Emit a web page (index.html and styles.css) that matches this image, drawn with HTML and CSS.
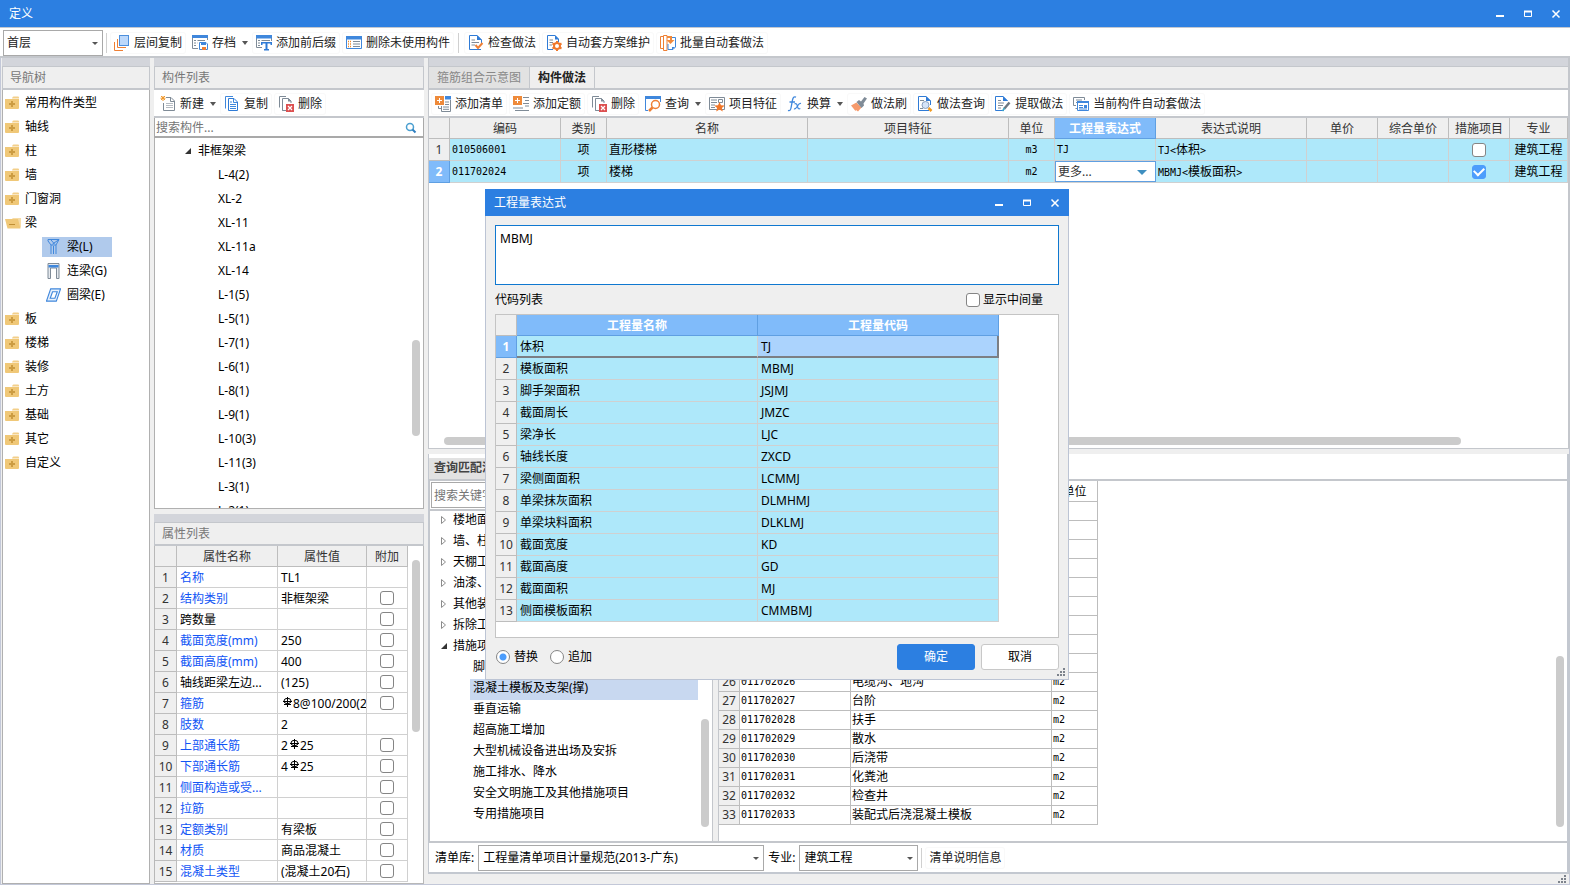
FILE: index.html
```html
<!DOCTYPE html>
<html lang="zh-CN">
<head>
<meta charset="utf-8">
<title>定义</title>
<link rel="stylesheet" href="styles.css">
</head>
<body>
<svg class="defs" aria-hidden="true">
  <symbol id="i-layers" viewBox="0 0 16 16"><rect x="5.5" y=".5" width="9" height="10" fill="#bcd8fb" stroke="#4d8fdc"/><path d="M3.500 4v8.500H12M.5 7v8.500H9" fill="none" stroke="#ee7f35"/></symbol>
  <symbol id="i-archive" viewBox="0 0 16 16"><path d="M.5 3v10.500H6M15.500 3v2" fill="none" stroke="#7f8b97"/><path d="M0 0h16v3H0z" fill="#3f87dc"/><path d="M2 5.500h2M5.500 5.500H13M2 8h2M5.500 8H6M2 10.500h2" stroke="#7f8b97"/><path d="M7.500 7.500H14l1.500 1.500v5.500h-8z" fill="#fff" stroke="#3f87dc"/><path d="M9 7h5v3H9z" fill="#3f87dc"/><path d="M10 12h4v3h-4z" fill="#ee7f35"/></symbol>
  <symbol id="i-affix" viewBox="0 0 16 16"><path d="M.5 3v9.500H6M15.500 3v3" fill="none" stroke="#7f8b97"/><path d="M0 0h16v3.500H0z" fill="#3f87dc"/><path d="M2 5.500h2M5.500 5.500H14M2 8h2M2 10.500h2" stroke="#7f8b97"/><path d="M5 7h11v3h-1.500V8.500h-3V14H13v1.500H8V14h1.500V8.500h-3V10H5z" fill="#2f7bd6"/></symbol>
  <symbol id="i-unused" viewBox="0 0 16 16"><path d="M.5 1.500h15v12H.5z" fill="#fff" stroke="#3f87dc"/><path d="M0 1h16v3.500H0z" fill="#3f87dc"/><path d="M2 6.500h3M2 9h3M2 11.500h3" stroke="#f08a2c" stroke-width="1.500" stroke-dasharray="1 1"/><path d="M7 6.500h7M7 9h7M7 11.500h7" stroke="#7f8b97"/></symbol>
  <symbol id="i-check" viewBox="0 0 16 16"><path d="M1.500.5H9L13.500 5v5M1.500.5v14H13" fill="none" stroke="#2f7bd6"/><path d="M9 0v5h5z" fill="#2f7bd6"/><path d="M3.500 5H7M3.500 7.500H11M3.500 10H7" stroke="#7f8b97"/><path d="M7.500 10l2.500 3 4.500-5" fill="none" stroke="#ee7f35" stroke-width="2"/></symbol>
  <symbol id="i-gear" viewBox="0 0 16 16"><path d="M7 14.500H1.500V.5H9L12.500 4v3" fill="none" stroke="#2f7bd6"/><path d="M9 0v4.500h4z" fill="#2f7bd6"/><path d="M3.500 5H7M3.500 7.500H7M3.500 10H6" stroke="#7f8b97"/><circle cx="11" cy="11" r="3" fill="#fff" stroke="#f0772a" stroke-width="2"/><path d="M11 6v1.500M11 14.500V16M6.500 8.500l1.500.8M14 12.700l1.500.8M6.500 13.500l1.500-.8M14 9.300l1.500-.8" stroke="#f0772a" stroke-width="2"/></symbol>
  <symbol id="i-batch" viewBox="0 0 16 16"><path d="M3 1.500H.5v12H3" fill="none" stroke="#ee7f35"/><path d="M4 .5h3v15H3.500V.5z" fill="#fff" stroke="#ee7f35"/><path d="M12 2.500h3.500V12L13 14.500H8V9" fill="none" stroke="#3f87dc"/><path d="M7 1h5v4h2.500L10.500 9 6.500 5H10V3H7z" fill="#f08a3c"/><path d="M12 12h3l-3 3z" fill="#3f87dc"/></symbol>
  <symbol id="i-addlist" viewBox="0 0 16 16"><path d="M3.500 10v2.500H6M6.500 10v5.500h9V4M13 15" fill="none" stroke="#7f8b97"/><path d="M0 0h9v9H0z" fill="#ee8a3a"/><path d="M4.500 2v5M2 4.500h5" stroke="#fff"/><path d="M10 0h6v3.500h-6z" fill="#3f87dc"/><path d="M10 6h4M10 8.500h4M8 11h6M8 13.300h6" stroke="#7f8b97"/></symbol>
  <symbol id="i-addquota" viewBox="0 0 16 16"><path d="M0 0h9v9H0z" fill="#ee8a3a"/><path d="M4.500 2v5M2 4.500h5" stroke="#fff"/><path d="M10 1.500h6M12 4.500h4M10 7.500h6M12 10h4M0 12h10M2 14.500h14" stroke="#7f8b97"/></symbol>
  <symbol id="i-del" viewBox="0 0 16 16"><path d="M8 .5H1.500v11M5 14.500h-.500v-12h6L13 5v2M8 14.500H4.500" fill="none" stroke="#7f8b97"/><path d="M10 2v3.500h3.500z" fill="#7f8b97"/><path d="M8 8h8v8H8z" fill="#dc5050"/><path d="M10 10l4 4M14 10l-4 4" stroke="#fff" stroke-width="1.200"/></symbol>
  <symbol id="i-query" viewBox="0 0 16 16"><path d="M.5 3v11.500H3M15.500 3v3" fill="none" stroke="#3f87dc"/><path d="M0 0h16v3H0z" fill="#3f87dc"/><circle cx="10.500" cy="8.500" r="4" fill="#fff" stroke="#ee7f35" stroke-width="1.500"/><path d="M7.500 11.500L4 15" stroke="#ee7f35" stroke-width="2.500"/></symbol>
  <symbol id="i-feature" viewBox="0 0 16 16"><path d="M.5 1.500h15v12H.5z" fill="#fff" stroke="#7f8b97"/><path d="M2 4h6M2 6.500h6M2 9h4M2 11.500h4M9.500 3.500h4v3h-4z" fill="none" stroke="#7f8b97"/><path d="M10.500 6l1.500 3.200 3.700.3-2.800 2.400.9 3.600-3.300-1.900L7.200 15.500l.9-3.600-2.800-2.400 3.700-.3z" fill="#f0772a"/></symbol>
  <symbol id="i-fx" viewBox="0 0 16 16"><path d="M9 1.200C7 .2 6 1.500 5.500 4L4 12c-.4 2.200-1.300 3-3 2.300M2.500 6H8" fill="none" stroke="#3f87dc" stroke-width="1.300"/><path d="M7.500 8c2-1 2.500.5 3 2.500s1 3 2.800 2M14 7.500c-1.500-.5-2.300.5-3.500 2.500s-2 3.500-3.500 2.700" fill="none" stroke="#3f87dc" stroke-width="1.200"/></symbol>
  <symbol id="i-brush" viewBox="0 0 16 16"><path d="M0 9.500L5.500 6.500l5 5L7 15.500l-2-1.500-.5 1z" fill="#f69a6c"/><path d="M5.500 6L8 4l2 1.500L13.500 1 16 2.500 12.500 7.500l.5 2L10.500 12z" fill="#7f8b97"/></symbol>
  <symbol id="i-docquery" viewBox="0 0 16 16"><path d="M12 14.500H1.500V.5H9L13.500 5v4" fill="none" stroke="#2f7bd6"/><path d="M9 0v5h5z" fill="#2f7bd6"/><path d="M3 4.500h4M3 12.500h3" stroke="#7f8b97"/><circle cx="8.500" cy="9" r="3.500" fill="#d5e4f8" stroke="#8aa0bd"/><path d="M11.500 12l3 3" stroke="#f29a1f" stroke-width="2.500"/></symbol>
  <symbol id="i-extract" viewBox="0 0 16 16"><path d="M9 14.500H.5V.5H8L12.500 5" fill="none" stroke="#2f7bd6"/><path d="M8 0v5h5z" fill="#2f7bd6"/><path d="M3 4.500h3M3 7h6M3 9.500h5M3 12h3" stroke="#7f8b97"/><path d="M14.500 6.500L9 13" stroke="#6c7780" stroke-width="2.500"/><path d="M9.500 12L7.500 15" stroke="#3fa9c9" stroke-width="1.500"/></symbol>
  <symbol id="i-auto" viewBox="0 0 16 16"><path d="M3 9.500H.5v-8h11V4M3 4h6M3 6.500h1M2.500 12.500H4" fill="none" stroke="#7f8b97"/><path d="M4.500 5.500h11v9h-11z" fill="#fff" stroke="#3f87dc"/><path d="M4 5h12v2H4zM11 9h3v3h-3z" fill="#3f87dc"/><path d="M6 9.500h4M6 11.500h4M6 13h8" stroke="#3f87dc"/></symbol>
  <symbol id="i-new" viewBox="0 0 16 16"><path d="M6 1.500h5L14.500 5v9.500h-11V7" fill="none" stroke="#7f8b97"/><path d="M10.500 1v4.500H15" fill="none" stroke="#7f8b97"/><path d="M6 7.500h7M6 9.500h7M6 11.500h7" stroke="#b6bcc3"/><path d="M1 0l4 4M5 0L1 4M3-.5v5.500M.5 2.200h5" stroke="#f0982c"/></symbol>
  <symbol id="i-copy" viewBox="0 0 16 16"><path d="M9 .5H1.500v12" fill="none" stroke="#3f87dc"/><path d="M4.500 2.500H10L13.500 6v8.500h-9z" fill="#fff" stroke="#2f7bd6"/><path d="M9.500 2.500V6.500H13M6 6h2M6 8.500h6M6 10.500h6M6 12.500h6" fill="none" stroke="#3f87dc"/></symbol>
  <symbol id="i-folder" viewBox="0 0 14 14"><path d="M7 2.500Q7.500.5 8.500.5H13q1 0 1 1v1z" fill="#f3cf89"/><path d="M0 3h14v9q0 1-1 1H1q-1 0-1-1z" fill="#f0c878"/><path d="M7 5v6M4 8h6" stroke="#cc9c42" stroke-width="2"/></symbol>
  <symbol id="i-open" viewBox="0 0 16 14"><path d="M7 2h9v9l-1 1z" fill="#f6dca8"/><path d="M0 3h13l2.500 9.500h-13z" fill="#f0c878"/><path d="M4 8.500h6" stroke="#c08f35"/></symbol>
  <symbol id="i-beam" viewBox="0 0 14 16"><path d="M1.500.5h11L9.500 6v9M4.500 15V6L1.500 2V.5M4.500 6h5M4.500 1L8 5M12 1L6 5M7 7v8" fill="none" stroke="#3f87dc"/></symbol>
  <symbol id="i-link" viewBox="0 0 14 16"><path d="M1.500.5h11v15H10V5H4v10.500H1.500z" fill="#e5e9ee" stroke="#7f8b97"/><path d="M2 2h10v2.500H2z" fill="#3f87dc"/></symbol>
  <symbol id="i-ring" viewBox="0 0 16 16"><path d="M5 1.500h10.500L11 14.500H.5zM7 4.500h5L9.500 11.500h-5z" fill="#e7f1fd" stroke="#3f87dc" stroke-width="1.200" fill-rule="evenodd"/></symbol>
  <symbol id="i-search" viewBox="0 0 12 12"><circle cx="5" cy="5" r="3.500" fill="none" stroke="#4a9fd0" stroke-width="1.500"/><path d="M7.500 7.500l3 3" stroke="#2f7fc0" stroke-width="2"/></symbol>
  <symbol id="i-expanded" viewBox="0 0 8 8"><path d="M1 7h6V1z" fill="#333"/></symbol>
  <symbol id="i-collapsed" viewBox="0 0 8 8"><path d="M1.500.5v7L5.500 4z" fill="#fff" stroke="#8c8c8c"/></symbol>
  <symbol id="i-min" viewBox="0 0 10 10"><path d="M1 6h8v2H1z" fill="#fff"/></symbol>
  <symbol id="i-max" viewBox="0 0 10 10"><path d="M1.500 2.500h7v5h-7z" fill="none" stroke="#fff"/><path d="M1 1.500h8v2H1z" fill="#fff"/></symbol>
  <symbol id="i-close" viewBox="0 0 10 10"><path d="M1.500 1.500l7 7M8.500 1.500l-7 7" stroke="#fff" stroke-width="1.500"/></symbol>
  <symbol id="i-rebar" viewBox="0 0 10 10"><path d="M5.500 0v10M1 4.500h9M2 7.500h7" stroke="#000"/><ellipse cx="5.500" cy="4" rx="3.500" ry="2.700" fill="none" stroke="#000"/></symbol>
  <symbol id="i-grip" viewBox="0 0 8 8"><path d="M6 0h2v2H6zM3 3h2v2H3zM6 3h2v2H6zM0 6h2v2H0zM3 6h2v2H3zM6 6h2v2H6z" fill="#7d838c"/></symbol>
</svg>

<header class="titlebar"><h1>定义</h1>
  <div class="winbtns"><button aria-label="最小化"><svg><use href="#i-min"/></svg></button><button aria-label="最大化"><svg><use href="#i-max"/></svg></button><button aria-label="关闭"><svg><use href="#i-close"/></svg></button></div>
</header>

<div class="toolbar main-toolbar">
  <span class="select floor"><select aria-label="楼层"><option>首层</option></select></span>
  <span class="sep"></span>
  <button class="tool"><svg><use href="#i-layers"/></svg>层间复制</button>
  <button class="tool drop"><svg><use href="#i-archive"/></svg>存档</button>
  <button class="tool"><svg><use href="#i-affix"/></svg>添加前后缀</button>
  <button class="tool"><svg><use href="#i-unused"/></svg>删除未使用构件</button>
  <span class="sep"></span>
  <button class="tool"><svg><use href="#i-check"/></svg>检查做法</button>
  <button class="tool"><svg><use href="#i-gear"/></svg>自动套方案维护</button>
  <button class="tool"><svg><use href="#i-batch"/></svg>批量自动套做法</button>
</div>

<main class="workspace">
  <section class="pane nav">
    <div class="strip"></div>
    <h2 class="pane-title">导航树</h2>
    <ul class="navtree">
      <li><svg><use href="#i-folder"/></svg>常用构件类型</li>
      <li><svg><use href="#i-folder"/></svg>轴线</li>
      <li><svg><use href="#i-folder"/></svg>柱</li>
      <li><svg><use href="#i-folder"/></svg>墙</li>
      <li><svg><use href="#i-folder"/></svg>门窗洞</li>
      <li><svg class="open"><use href="#i-open"/></svg>梁</li>
      <li class="sub selected"><svg><use href="#i-beam"/></svg>梁(L)</li>
      <li class="sub"><svg><use href="#i-link"/></svg>连梁(G)</li>
      <li class="sub"><svg><use href="#i-ring"/></svg>圈梁(E)</li>
      <li><svg><use href="#i-folder"/></svg>板</li>
      <li><svg><use href="#i-folder"/></svg>楼梯</li>
      <li><svg><use href="#i-folder"/></svg>装修</li>
      <li><svg><use href="#i-folder"/></svg>土方</li>
      <li><svg><use href="#i-folder"/></svg>基础</li>
      <li><svg><use href="#i-folder"/></svg>其它</li>
      <li><svg><use href="#i-folder"/></svg>自定义</li>
    </ul>
  </section>

  <div class="middle">
    <section class="pane components">
      <div class="strip"></div>
      <h2 class="pane-title">构件列表</h2>
      <div class="toolbar">
        <button class="tool drop"><svg><use href="#i-new"/></svg>新建</button>
        <button class="tool"><svg><use href="#i-copy"/></svg>复制</button>
        <button class="tool"><svg><use href="#i-del"/></svg>删除</button>
      </div>
      <div class="search"><input type="text" placeholder="搜索构件..." aria-label="搜索构件"><svg><use href="#i-search"/></svg></div>
      <ul class="complist">
        <li class="parent"><svg><use href="#i-expanded"/></svg>非框架梁</li>
        <li>L-4(2)</li><li>XL-2</li><li>XL-11</li><li>XL-11a</li><li>XL-14</li><li>L-1(5)</li><li>L-5(1)</li><li>L-7(1)</li><li>L-6(1)</li><li>L-8(1)</li><li>L-9(1)</li><li>L-10(3)</li><li>L-11(3)</li><li>L-3(1)</li><li>L-2(1)</li>
      </ul>
      <span class="scroll comp-scroll"></span>
    </section>

    <section class="pane props">
      <div class="strip"></div>
      <h2 class="pane-title">属性列表</h2>
      <div class="props-body">
      <table class="grid props-grid">
        <colgroup><col class="w22"><col class="w101"><col class="w89"><col class="w41"></colgroup>
        <thead><tr><th></th><th>属性名称</th><th>属性值</th><th>附加</th></tr></thead>
        <tbody>
          <tr><th>1</th><td class="blue">名称</td><td>TL1</td><td></td></tr>
          <tr><th>2</th><td class="blue">结构类别</td><td>非框架梁</td><td><input type="checkbox" aria-label="附加 结构类别"></td></tr>
          <tr><th>3</th><td>跨数量</td><td></td><td><input type="checkbox" aria-label="附加 跨数量"></td></tr>
          <tr><th>4</th><td class="blue">截面宽度(mm)</td><td>250</td><td><input type="checkbox" aria-label="附加 截面宽度"></td></tr>
          <tr><th>5</th><td class="blue">截面高度(mm)</td><td>400</td><td><input type="checkbox" aria-label="附加 截面高度"></td></tr>
          <tr><th>6</th><td>轴线距梁左边...</td><td>(125)</td><td><input type="checkbox" aria-label="附加 轴线距梁左边"></td></tr>
          <tr><th>7</th><td class="blue">箍筋</td><td><svg><use href="#i-rebar"/></svg>8@100/200(2)</td><td><input type="checkbox" aria-label="附加 箍筋"></td></tr>
          <tr><th>8</th><td class="blue">肢数</td><td>2</td><td></td></tr>
          <tr><th>9</th><td class="blue">上部通长筋</td><td>2<svg><use href="#i-rebar"/></svg>25</td><td><input type="checkbox" aria-label="附加 上部通长筋"></td></tr>
          <tr><th>10</th><td class="blue">下部通长筋</td><td>4<svg><use href="#i-rebar"/></svg>25</td><td><input type="checkbox" aria-label="附加 下部通长筋"></td></tr>
          <tr><th>11</th><td class="blue">侧面构造或受...</td><td></td><td><input type="checkbox" aria-label="附加 侧面构造"></td></tr>
          <tr><th>12</th><td class="blue">拉筋</td><td></td><td><input type="checkbox" aria-label="附加 拉筋"></td></tr>
          <tr><th>13</th><td class="blue">定额类别</td><td>有梁板</td><td><input type="checkbox" aria-label="附加 定额类别"></td></tr>
          <tr><th>14</th><td class="blue">材质</td><td>商品混凝土</td><td><input type="checkbox" aria-label="附加 材质"></td></tr>
          <tr><th>15</th><td class="blue">混凝土类型</td><td>(混凝土20石)</td><td><input type="checkbox" aria-label="附加 混凝土类型"></td></tr>
        </tbody>
      </table>
      <span class="scroll props-scroll"></span>
      </div>
    </section>
  </div>

  <div class="right">
    <section class="pane practice">
      <div class="strip"></div>
      <div class="tabs"><button class="tab">箍筋组合示意图</button><button class="tab active">构件做法</button></div>
      <div class="toolbar practice-toolbar">
        <button class="tool"><svg><use href="#i-addlist"/></svg>添加清单</button>
        <button class="tool"><svg><use href="#i-addquota"/></svg>添加定额</button>
        <button class="tool"><svg><use href="#i-del"/></svg>删除</button>
        <button class="tool drop"><svg><use href="#i-query"/></svg>查询</button>
        <button class="tool"><svg><use href="#i-feature"/></svg>项目特征</button>
        <button class="tool drop"><svg><use href="#i-fx"/></svg>换算</button>
        <button class="tool"><svg><use href="#i-brush"/></svg>做法刷</button>
        <button class="tool"><svg><use href="#i-docquery"/></svg>做法查询</button>
        <button class="tool"><svg><use href="#i-extract"/></svg>提取做法</button>
        <button class="tool"><svg><use href="#i-auto"/></svg>当前构件自动套做法</button>
      </div>
      <table class="grid practice-grid">
        <colgroup><col class="w21"><col class="w111"><col class="w46"><col class="w201"><col class="w201"><col class="w46"><col class="w101"><col class="w151"><col class="w71"><col class="w71"><col class="w61"><col></colgroup>
        <thead><tr><th></th><th>编码</th><th>类别</th><th>名称</th><th>项目特征</th><th>单位</th><th class="hot">工程量表达式</th><th>表达式说明</th><th>单价</th><th>综合单价</th><th>措施项目</th><th>专业</th></tr></thead>
        <tbody>
          <tr><th>1</th><td class="mono">010506001</td><td class="center">项</td><td>直形楼梯</td><td></td><td class="mono center">m3</td><td class="mono">TJ</td><td class="mono">TJ&lt;<span>体积</span>&gt;</td><td></td><td></td><td class="center"><input type="checkbox" aria-label="措施项目 1"></td><td class="center">建筑工程</td></tr>
          <tr><th class="hot">2</th><td class="mono">011702024</td><td class="center">项</td><td>楼梯</td><td></td><td class="mono center">m2</td><td class="edit"><span class="select"><select aria-label="工程量表达式"><option>更多...</option></select></span></td><td class="mono">MBMJ&lt;<span>模板面积</span>&gt;</td><td></td><td></td><td class="center"><input type="checkbox" aria-label="措施项目 2" checked></td><td class="center">建筑工程</td></tr>
        </tbody>
      </table>
      <span class="scroll practice-scroll"></span>
    </section>

    <section class="match">
      <div class="match-tabs"><button>查询匹配清单</button></div>
      <div class="match-body">
        <div class="chapters">
          <div class="keyword"><input type="text" placeholder="搜索关键字" aria-label="搜索关键字"></div>
          <ul class="chapter-tree">
            <li><svg><use href="#i-collapsed"/></svg>楼地面装饰工程</li>
            <li><svg><use href="#i-collapsed"/></svg>墙、柱面装饰</li>
            <li><svg><use href="#i-collapsed"/></svg>天棚工程</li>
            <li><svg><use href="#i-collapsed"/></svg>油漆、涂料</li>
            <li><svg><use href="#i-collapsed"/></svg>其他装饰工程</li>
            <li><svg><use href="#i-collapsed"/></svg>拆除工程</li>
            <li><svg><use href="#i-expanded"/></svg>措施项目</li>
            <li class="leaf">脚手架工程</li>
            <li class="leaf selected">混凝土模板及支架(撑)</li>
            <li class="leaf">垂直运输</li>
            <li class="leaf">超高施工增加</li>
            <li class="leaf">大型机械设备进出场及安拆</li>
            <li class="leaf">施工排水、降水</li>
            <li class="leaf">安全文明施工及其他措施项目</li>
            <li class="leaf">专用措施项目</li>
          </ul>
          <span class="scroll chapter-scroll"></span>
        </div>
        <div class="items">
          <table class="grid items-grid">
            <colgroup><col class="w21"><col class="w111"><col class="w201"><col class="w46"></colgroup>
            <thead><tr><th></th><th>编码</th><th>名称</th><th>单位</th></tr></thead>
            <tbody>
              <tr><th>17</th><td></td><td></td><td></td></tr>
              <tr><th>18</th><td></td><td></td><td></td></tr>
              <tr><th>19</th><td></td><td></td><td></td></tr>
              <tr><th>20</th><td></td><td></td><td></td></tr>
              <tr><th>21</th><td></td><td></td><td></td></tr>
              <tr><th>22</th><td></td><td></td><td></td></tr>
              <tr><th>23</th><td></td><td></td><td></td></tr>
              <tr><th>24</th><td></td><td></td><td></td></tr>
              <tr><th>25</th><td></td><td></td><td></td></tr>
              <tr><th>26</th><td class="mono">011702026</td><td>电缆沟、地沟</td><td class="mono">m2</td></tr>
              <tr><th>27</th><td class="mono">011702027</td><td>台阶</td><td class="mono">m2</td></tr>
              <tr><th>28</th><td class="mono">011702028</td><td>扶手</td><td class="mono">m2</td></tr>
              <tr><th>29</th><td class="mono">011702029</td><td>散水</td><td class="mono">m2</td></tr>
              <tr><th>30</th><td class="mono">011702030</td><td>后浇带</td><td class="mono">m2</td></tr>
              <tr><th>31</th><td class="mono">011702031</td><td>化粪池</td><td class="mono">m2</td></tr>
              <tr><th>32</th><td class="mono">011702032</td><td>检查井</td><td class="mono">m2</td></tr>
              <tr><th>33</th><td class="mono">011702033</td><td>装配式后浇混凝土模板</td><td class="mono">m2</td></tr>
            </tbody>
          </table>
          <span class="scroll items-scroll"></span>
        </div>
      </div>
      <div class="library">
        <label for="lib">清单库:</label><span class="select lib"><select id="lib"><option>工程量清单项目计量规范(2013-广东)</option></select></span>
        <label for="major">专业:</label><span class="select major"><select id="major"><option>建筑工程</option></select></span>
        <span class="sep"></span><button class="tool">清单说明信息</button>
      </div>
    </section>
    <footer class="status"><svg><use href="#i-grip"/></svg></footer>
  </div>
</main>

<div class="dialog" role="dialog" aria-labelledby="dlg-title">
  <header class="titlebar"><h2 id="dlg-title">工程量表达式</h2>
    <div class="winbtns"><button aria-label="最小化"><svg><use href="#i-min"/></svg></button><button aria-label="最大化"><svg><use href="#i-max"/></svg></button><button aria-label="关闭"><svg><use href="#i-close"/></svg></button></div>
  </header>
  <div class="dialog-body">
    <textarea aria-label="表达式">MBMJ</textarea>
    <div class="caption"><span>代码列表</span><label><input type="checkbox">显示中间量</label></div>
    <div class="codes">
      <table class="grid codes-grid">
        <colgroup><col class="w21"><col class="w241"><col class="w241"></colgroup>
        <thead><tr><th></th><th class="hot">工程量名称</th><th class="hot">工程量代码</th></tr></thead>
        <tbody>
          <tr class="current"><th class="hot">1</th><td>体积</td><td>TJ</td></tr>
          <tr><th>2</th><td>模板面积</td><td>MBMJ</td></tr>
          <tr><th>3</th><td>脚手架面积</td><td>JSJMJ</td></tr>
          <tr><th>4</th><td>截面周长</td><td>JMZC</td></tr>
          <tr><th>5</th><td>梁净长</td><td>LJC</td></tr>
          <tr><th>6</th><td>轴线长度</td><td>ZXCD</td></tr>
          <tr><th>7</th><td>梁侧面面积</td><td>LCMMJ</td></tr>
          <tr><th>8</th><td>单梁抹灰面积</td><td>DLMHMJ</td></tr>
          <tr><th>9</th><td>单梁块料面积</td><td>DLKLMJ</td></tr>
          <tr><th>10</th><td>截面宽度</td><td>KD</td></tr>
          <tr><th>11</th><td>截面高度</td><td>GD</td></tr>
          <tr><th>12</th><td>截面面积</td><td>MJ</td></tr>
          <tr><th>13</th><td>侧面模板面积</td><td>CMMBMJ</td></tr>
        </tbody>
      </table>
    </div>
    <div class="actions">
      <label><input type="radio" name="mode" checked>替换</label>
      <label><input type="radio" name="mode">追加</label>
      <span class="spacer"></span>
      <button class="btn primary">确定</button><button class="btn">取消</button>
    </div>
  </div>
  <svg class="grip"><use href="#i-grip"/></svg>
</div>
</body>
</html>
```
FILE: styles.css
```css
* { box-sizing: border-box; }
html, body { height: 100%; }
body {
  margin: 0;
  display: flex;
  flex-direction: column;
  position: relative;
  overflow: hidden;
  background: #efefef;
  color: #000;
  font: 12px/16px "Noto Sans", "Noto Sans CJK SC", sans-serif;
}
button, input, select, textarea { font: inherit; color: inherit; margin: 0; }
button { background: none; border: 0; padding: 0; }
ul { list-style: none; margin: 0; padding: 0; }
h1, h2 { margin: 0; font-size: 12px; font-weight: 400; }
svg { display: block; flex: none; }
.defs { position: absolute; width: 0; height: 0; }

.titlebar {
  flex: none;
  height: 27px;
  padding-left: 9px;
  display: flex;
  align-items: center;
  justify-content: space-between;
  background: #2c7fe1;
  color: #fff;
}
.winbtns { display: flex; }
.winbtns button { width: 28px; height: 27px; display: grid; place-items: center; }
.winbtns svg { width: 10px; height: 10px; }

/* toolbars */
.toolbar {
  flex: none;
  height: 28px;
  display: flex;
  align-items: center;
  gap: 2px;
  padding: 2px 2px 0;
  background: #fff;
  border-bottom: 2px solid #c4c7cc;
  color: #222;
}
.main-toolbar {
  height: 31px;
  padding: 1px 3px 0;
  border-top: 1px solid #c3c8d0;
}
.tool {
  height: 22px;
  padding: 0 4px;
  display: flex;
  align-items: center;
  gap: 4px;
  white-space: nowrap;
  color: #222;
  border-radius: 3px;
  box-shadow: inset 0 0 0 1px #f9f9f9;
}
.tool svg { width: 16px; height: 16px; }
.drop { padding-right: 2px; box-shadow: none; }
.drop::after {
  content: "";
  margin-left: 2px;
  border: 3px solid transparent;
  border-top: 4px solid #555;
  border-bottom: 0;
}
.sep { width: 1px; height: 20px; margin: 0 3px 0 2px; background: #d0d0d0; }
.floor + .sep { margin: 0 1px; }

.select { position: relative; display: block; }
.select select {
  appearance: none;
  display: block;
  width: 100%;
  height: 26px;
  padding: 0 4px;
  background: #fff;
  border: 1px solid #a9a9a9;
  border-radius: 0;
}
.select::after {
  content: "";
  position: absolute;
  right: 5px;
  top: 50%;
  margin-top: -1px;
  border: 3px solid transparent;
  border-top: 3px solid #555;
  border-bottom: 0;
}
.floor { width: 100px; }
.floor select { padding: 0 3px; }

/* panes */
.workspace {
  flex: 1;
  min-height: 0;
  display: grid;
  grid-template-columns: 148px 270px minmax(0, 1fr);
  gap: 4px;
  padding: 0 0 1px 2px;
  background: #efefef;
  box-shadow: inset 1px 0 #c3c8d8, inset -1px 0 #c3c8d8, inset 0 -1px #c3c8d8;
}
.middle, .right { display: flex; flex-direction: column; min-height: 0; min-width: 0; }
.middle { gap: 5px; }
.pane { display: flex; flex-direction: column; min-height: 0; position: relative; overflow: hidden; }
.strip { flex: none; height: 9px; background: #d3d5db; border-bottom: 1px solid #c4c7cc; }
.pane-title {
  flex: none;
  height: 23px;
  padding-left: 7px;
  line-height: 21px;
  color: #777;
  border: 1px solid #c4c7cc;
  border-width: 0 1px 2px;
}
.navtree, .complist { flex: 1; min-height: 0; padding-top: 1px; overflow: hidden; background: #fff; border: 1px solid #b0b0b0; border-top: 0; }
.navtree li { height: 24px; padding-left: 2px; display: flex; align-items: center; gap: 6px; }
.navtree svg { width: 14px; height: 14px; }
.navtree .open { width: 16px; margin-right: -2px; }
.navtree .sub { width: 70px; margin-left: 39px; padding-left: 4px; gap: 6px; white-space: nowrap; }
.navtree .sub svg { width: 15px; height: 16px; }
.navtree .selected { height: 20px; margin-top: 2px; margin-bottom: 2px; background: #b0caec; }

.components { flex: 450 1 0; }
.props { flex: 370 1 0; }
.search {
  flex: none;
  display: flex;
  align-items: center;
  height: 20px;
  padding: 1px 6px 0 0;
  background: #fff;
  border: 1px solid #a9a9a9;
  border-width: 0 1px 2px;
}
.search input, .keyword input { flex: 1; min-width: 0; border: 0; padding: 0 1px; background: #fff; outline: 0; }
input::placeholder { color: #757575; opacity: 1; }
.search svg { width: 12px; height: 12px; }
.complist li { height: 24px; line-height: 24px; padding-left: 63px; }
.complist .parent { display: flex; align-items: center; gap: 6px; padding-left: 29px; }
.complist svg { width: 8px; height: 8px; }

.scroll { position: absolute; background: #cbcbcb; border-radius: 4px; width: 8px; }
.comp-scroll { right: 4px; top: 282px; height: 96px; }
.props-scroll { right: 3px; top: 14px; height: 172px; }
.practice-scroll { left: 15px; right: 107px; bottom: 3px; width: auto; height: 8px; }
.chapter-scroll { right: 3px; bottom: 14px; height: 108px; }
.items-scroll { right: 3px; bottom: 14px; height: 171px; }

/* tables */
.grid { table-layout: fixed; border-collapse: separate; border-spacing: 0; }
.grid th, .grid td {
  padding: 0 2px;
  height: 21px;
  border: 1px solid #d0d0d0;
  border-width: 0 1px 1px 0;
  overflow: hidden;
  white-space: nowrap;
  text-align: left;
  font-weight: 400;
  line-height: 16px;
}
.grid th { background: #efefef; border-color: #bdbdbd; color: #333; text-align: center; padding: 1px 0 0; }
.grid thead th { padding-top: 2px; }
.grid .hot { background: #80bbfa; border-color: #5f9fe2; color: #fff; font-weight: 700; }
.grid .center { text-align: center; padding: 0; }
.grid .mono { font-family: "DejaVu Sans Mono", monospace; font-size: 10px; }
.mono span { font: 12px/16px "Noto Sans CJK SC", sans-serif; }
.w21 { width: 21px; } .w22 { width: 22px; } .w41 { width: 41px; } .w46 { width: 46px; }
.w61 { width: 61px; } .w71 { width: 71px; } .w89 { width: 89px; } .w101 { width: 101px; }
.w111 { width: 111px; } .w151 { width: 151px; } .w201 { width: 201px; } .w241 { width: 241px; }

.props-body { position: relative; flex: 1; min-height: 0; overflow: hidden; background: #fff; border: 1px solid #b8b8b8; border-top: 0; }
.props-grid { width: 253px; }
.grid.props-grid tbody th { padding-top: 2px; }
.props-grid td { padding: 2px 3px 0; }
.props-grid td:last-child { padding: 0; text-align: center; }
.props-grid .blue { color: #1155f5; }
.props-grid svg { display: inline-block; width: 10px; height: 10px; margin: 0 1px; vertical-align: 1px; }

input[type="checkbox"] {
  appearance: none;
  display: inline-block;
  width: 14px;
  height: 14px;
  border: 1px solid #858585;
  border-radius: 3px;
  background: #fff;
  vertical-align: middle;
}
input[type="checkbox"]:checked {
  border-color: #4c9dfc;
  background: #4c9dfc;
  display: inline-grid;
  place-items: center;
}
input[type="checkbox"]:checked::after {
  content: "";
  width: 8px;
  height: 5px;
  margin-bottom: 3px;
  border: solid #fff;
  border-width: 0 0 2px 2px;
  transform: rotate(-45deg);
}

/* practice pane */
.practice { flex: 391 1 0; background: #fff; border: solid #c4c7cc; border-width: 0 2px 1px 1px; }
.tabs { flex: none; height: 23px; display: flex; background: #efefef; border-bottom: 2px solid #c4c7cc; }
.tab { padding: 0 8px; border-right: 1px solid #c4c7cc; background: #e2e2e2; color: #888; }
.tab.active { background: #efefef; color: #222; font-weight: 700; }
.practice-toolbar { padding-left: 2px; }
.practice-grid { width: 100%; }
.practice-grid tbody td, .practice-grid tbody th { height: 22px; }
.practice-grid td { background: #aee8fa; }
.practice-grid .edit { padding: 0; border-right: 0; }
.edit .select select { height: 21px; border-color: #5f9fe2; color: #333; padding: 0 2px; }
.edit .select::after { right: 9px; margin-top: -2px; border-width: 5px 5px 0; border-top-color: #3f8fc0; }

/* matching list */
.match { flex: 420 1 0; min-height: 0; margin-top: 5px; display: flex; flex-direction: column; border: 1px solid #c3c8d0; border-width: 0 3px 2px 1px; background: #fff; }
.match-tabs { flex: none; height: 27px; padding-top: 4px; background: #fff; border-bottom: 2px solid #c4c7cc; }
.match-tabs button { height: 21px; padding: 0 5px; background: #e2e2e2; color: #444; font-weight: 700; }
.match-body { flex: 1; min-height: 0; display: grid; grid-template-columns: 284px minmax(0, 1fr); gap: 5px; background: #efefef; overflow: hidden; }
.chapters, .items { position: relative; min-height: 0; overflow: hidden; background: #fff; border: solid #c4c7cc; border-width: 0 1px; }
.items { border-right: 0; }
.keyword { display: flex; height: 30px; padding: 1px; border-bottom: 2px solid #c4c7cc; }
.keyword input { border: 1px solid #a9a9a9; padding: 2px 2px 0; }
.chapter-tree li { height: 21px; display: flex; align-items: center; gap: 5px; padding: 0 0 3px 10px; white-space: nowrap; }
.chapter-tree svg { width: 8px; height: 8px; }
.chapter-tree .leaf { margin: 0 14px 0 40px; padding-left: 3px; }
.chapter-tree .selected { background: #c8d8f0; }
.items-grid { width: 379px; }
.items-grid th, .items-grid td { height: 19px; border-color: #bdbdbd; padding: 0 1px; }
.items-grid thead th { height: 21px; padding-top: 3px; background: #fff; color: #000; }
.library { flex: none; height: 31px; display: flex; align-items: center; padding-left: 6px; border-top: 2px solid #c4c7cc; }
.library label { margin-right: 4px; }
.library .lib { width: 286px; margin-right: 4px; }
.library .major { width: 119px; }
.library .sep { margin: 0 3px; }
.status { flex: none; height: 10px; display: flex; justify-content: flex-end; align-items: center; }
.status svg { width: 8px; height: 8px; margin-right: 4px; }

/* dialog */
.dialog { position: absolute; left: 485px; top: 189px; width: 584px; background: #efefef; }
.dialog-body { padding: 9px; border: 1px solid #bcc4d4; border-top: 0; }
.dialog textarea { display: block; width: 100%; height: 60px; padding: 5px 4px; border: 1px solid #0f78d0; background: #fff; resize: none; outline: 0; }
.caption { display: flex; justify-content: space-between; align-items: center; height: 29px; padding-right: 16px; }
.caption label, .actions label { display: flex; align-items: center; gap: 3px; }
.codes { height: 324px; border: 1px solid #c4c4c4; background: #fff; }
.codes-grid { width: 503px; }
.codes-grid tbody th, .codes-grid tbody td { height: 22px; }
.codes-grid td { background: #aee8fa; padding: 0 3px; }
.codes-grid .current td { padding-top: 1px; border-bottom: 2px solid #7c7f84; }
.codes-grid .current td:last-child { background: #abd3fd; border-right: 2px solid #7c7f84; }
.actions { display: flex; align-items: center; height: 32px; padding: 6px 0 0 1px; gap: 6px; }
.actions label { margin-right: 6px; }
.spacer { flex: 1; }
input[type="radio"] { appearance: none; width: 14px; height: 14px; margin: 0 1px 0 0; border: 1px solid #858585; border-radius: 50%; background: #fff; }
input[type="radio"]:checked { background: radial-gradient(circle, #4c9dfc 3px, #fff 4px); }
.btn { width: 78px; height: 26px; background: #fff; border: 1px solid #c8c8c8; border-radius: 3px; }
.primary { background: #2c7fe1; border-color: #2c7fe1; color: #fff; }
.grip { position: absolute; right: 4px; bottom: 4px; width: 8px; height: 8px; }
```
